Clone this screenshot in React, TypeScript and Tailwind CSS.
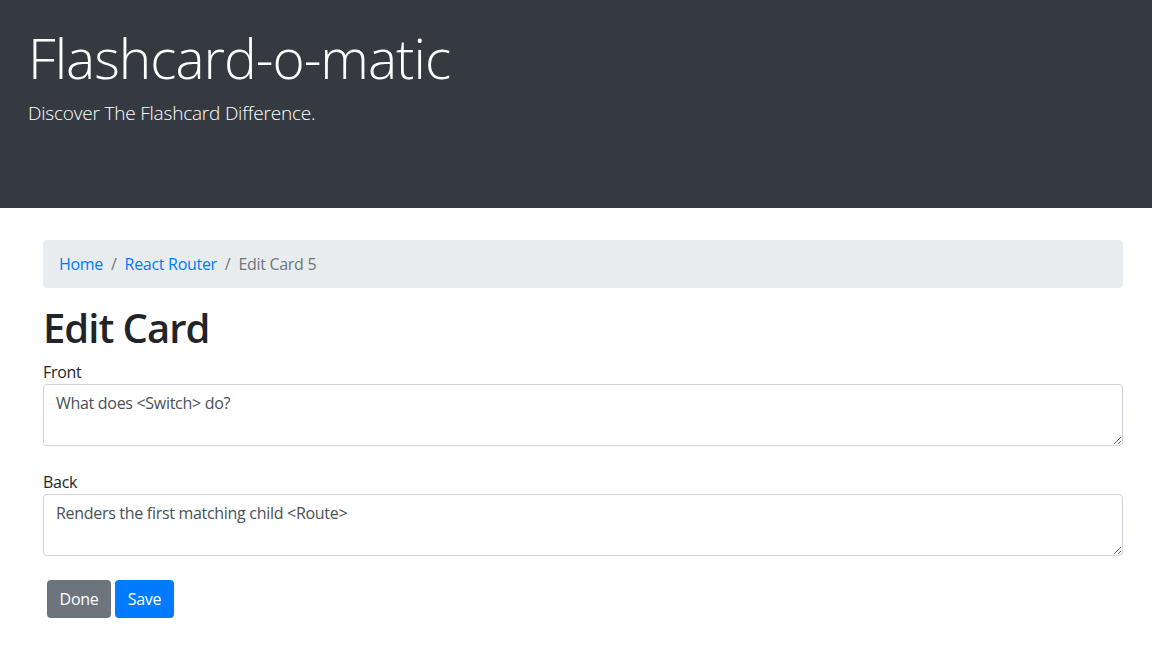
import React from "react";

export default function App() {
  const font = { fontFamily: '"Open Sans", "Noto Sans", sans-serif' };
  return (
    <div className="min-h-[665px] bg-white text-[#212529] tracking-[-0.3px]" style={font}>
      <header className="h-[208px] bg-[#343a40] pl-[28px] pt-[24px] text-white">
        <h1 className="text-[55px] leading-[67px] font-light tracking-[-1px]">Flashcard-o-matic</h1>
        <p className="mt-[7px] text-[19px] leading-[30px] font-light tracking-[-0.2px]">Discover The Flashcard Difference.</p>
      </header>
      <main className="ml-[43px] w-[1080px] pt-[32px]">
        <nav className="flex h-[48px] items-center rounded bg-[#e9ecef] px-4 text-base">
          <a className="text-[#007bff]">Home</a>
          <span className="px-2 text-[#6c757d]">/</span>
          <a className="text-[#007bff]">React Router</a>
          <span className="px-2 text-[#6c757d]">/</span>
          <span className="text-[#6c757d]">Edit Card 5</span>
        </nav>
        <h2 className="mt-4 text-[40px] leading-[48px] font-semibold tracking-[-1px]">Edit Card</h2>
        <form className="mt-2">
          <label className="block text-base leading-6">Front</label>
          <textarea
            rows={2}
            defaultValue="What does <Switch> do?"
            className="block h-[62px] w-full rounded border border-[#ced4da] px-3 py-[6px] text-base leading-6 text-[#495057]"
          />
          <label className="mt-6 block text-base leading-6">Back</label>
          <textarea
            rows={2}
            defaultValue="Renders the first matching child <Route>"
            className="block h-[62px] w-full rounded border border-[#ced4da] px-3 py-[6px] text-base leading-6 text-[#495057]"
          />
          <div className="mt-6 ml-1 flex gap-1">
            <button type="button" className="h-[38px] w-[64px] rounded bg-[#6c757d] text-base text-white">Done</button>
            <button type="button" className="h-[38px] w-[59px] rounded bg-[#007bff] text-base text-white">Save</button>
          </div>
        </form>
      </main>
    </div>
  );
}
